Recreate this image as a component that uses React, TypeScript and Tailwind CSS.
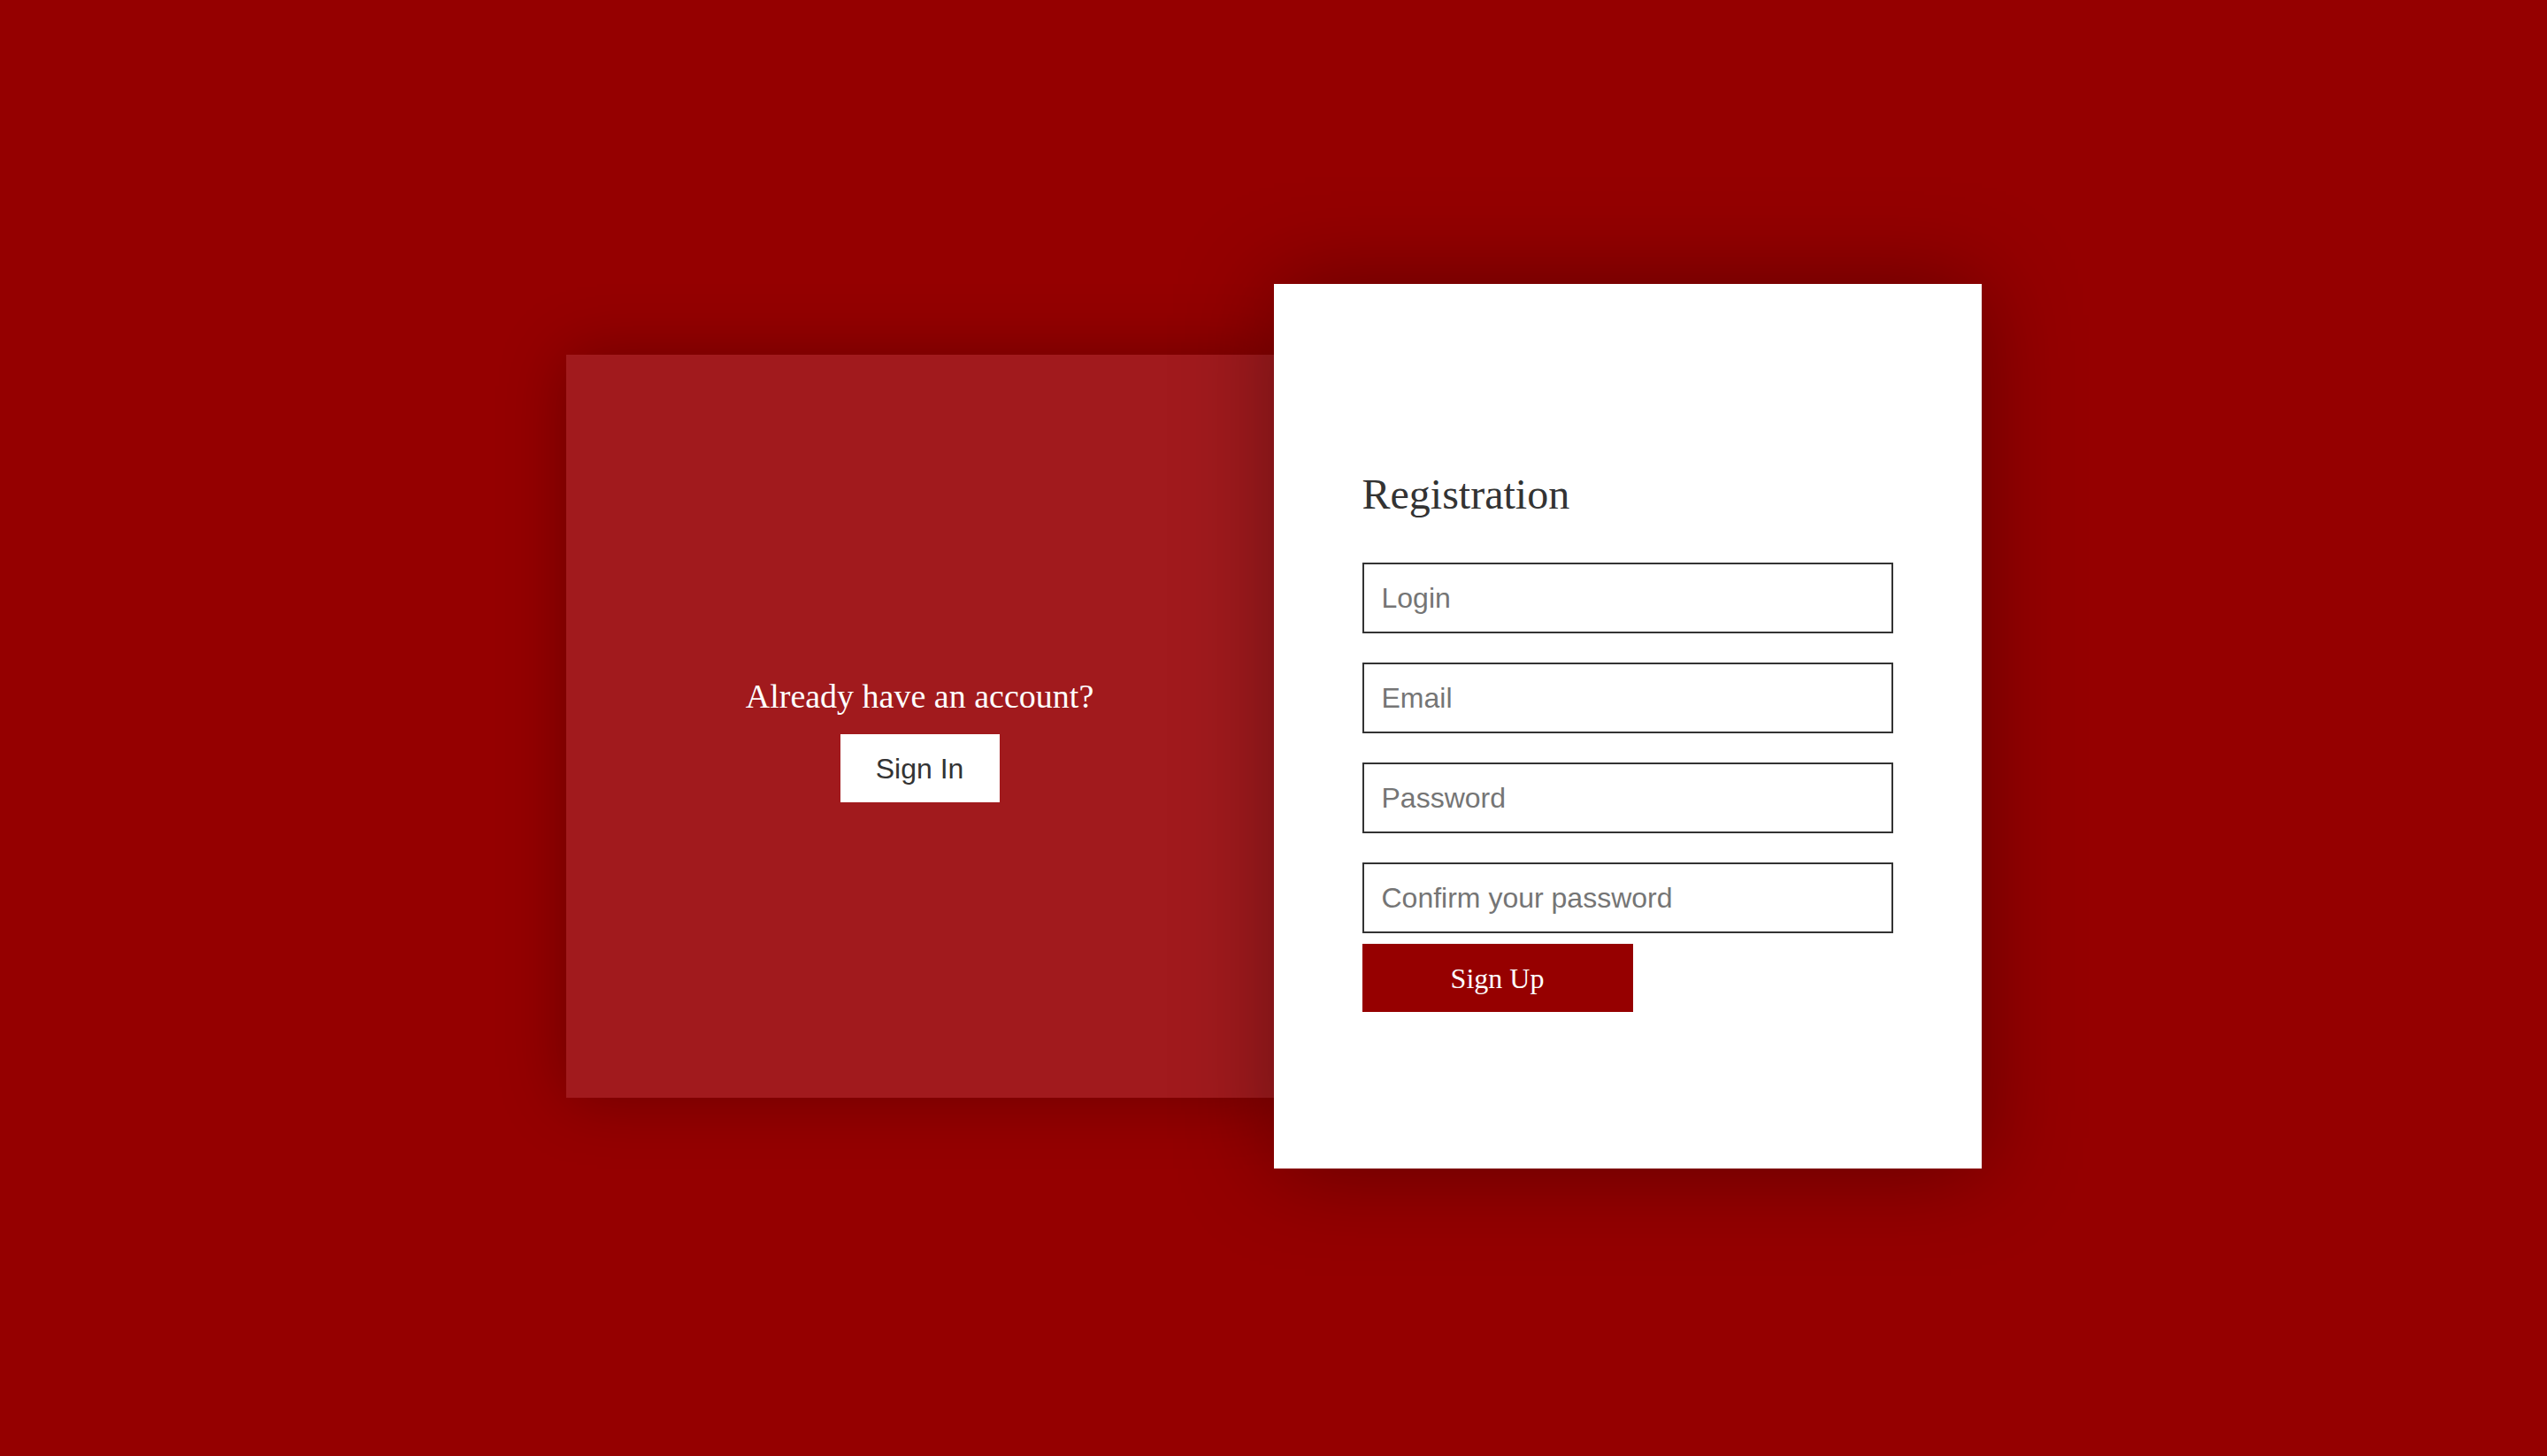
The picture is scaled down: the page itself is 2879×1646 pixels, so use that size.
import React from "react";

const fields = ["Login", "Email", "Password", "Confirm your password"];

export default function App() {
    return (
        <div className="h-screen w-full bg-[#950000] flex items-center justify-center pb-[4px] overflow-hidden">
            <div className="flex items-center">
                <div className="w-[800px] h-[840px] bg-[#a11a1d] shadow-[0_0_70px_rgba(0,0,0,0.28)] flex flex-col items-center pt-[367px]">
                    <p className="text-[38px] leading-[38px] text-white font-['Liberation_Serif',serif]">
                        Already have an account?
                    </p>
                    <button className="mt-[24px] w-[180px] h-[77px] bg-white text-[#333] text-[32px] font-['Liberation_Sans',sans-serif]">
                        Sign In
                    </button>
                </div>
                <div className="relative z-10 w-[800px] h-[1000px] bg-white shadow-[0_0_100px_rgba(0,0,0,0.35)] px-[100px] pt-[214px]">
                    <h2 className="text-[48px] leading-[48px] text-[#333] font-['Liberation_Serif',serif]">
                        Registration
                    </h2>
                    <form className="mt-[53px] flex flex-col gap-[33px]">
                        {fields.map((f) => (
                            <input
                                key={f}
                                placeholder={f}
                                type="text"
                                className="w-[600px] h-[80px] border-2 border-[#333] px-[20px] text-[32px] text-[#333] placeholder:text-[#757575] font-['Liberation_Sans',sans-serif] focus:outline-none"
                            />
                        ))}
                    </form>
                    <button className="mt-[12px] w-[306px] h-[77px] bg-[#960000] text-white text-[32px] font-['Liberation_Serif',serif]">
                        Sign Up
                    </button>
                </div>
            </div>
        </div>
    );
}
